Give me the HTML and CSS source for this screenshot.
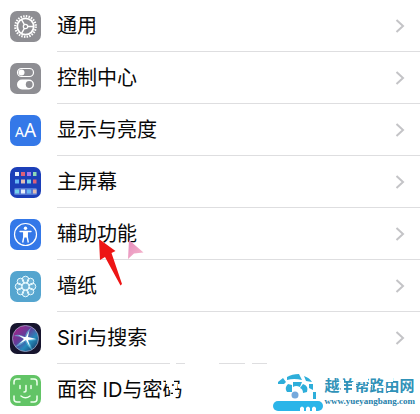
FILE: index.html
```html
<!DOCTYPE html>
<html lang="zh-CN">
<head>
<meta charset="utf-8">
<meta name="viewport" content="width=device-width, initial-scale=1">
<title>设置</title>
<link rel="stylesheet" href="styles.css">
</head>
<body>
<main class="screen">
<nav class="settings" aria-label="设置">
  <a class="row" href="#general">
    <svg class="icon" viewBox="0 0 31 31"><rect width="31" height="31" rx="7" fill="#8e8e93"/><g fill="none" stroke="#fff"><circle cx="15.5" cy="15.5" r="10.3" stroke-width="2.2" stroke-dasharray="1.5 1.197"/><circle cx="15.5" cy="15.5" r="8.2" stroke-width="1.8"/><circle cx="15.5" cy="15.5" r="2.2" stroke-width="1.2"/><path d="M17.7 15.5h6M14.4 13.6l-3-5.2M14.4 17.4l-3 5.2" stroke-width="1.4"/></g></svg>
    <span class="label">通用</span><svg class="chevron" viewBox="0 0 10 16"><path d="M1.5 2l6.5 6-6.5 6"/></svg>
  </a>
  <a class="row" href="#control">
    <svg class="icon" viewBox="0 0 31 31"><rect width="31" height="31" rx="7" fill="#8e8e93"/><rect x="7.5" y="5.5" width="16" height="8" rx="4" fill="none" stroke="#fff" stroke-width="1.2"/><circle cx="11.5" cy="9.5" r="3" fill="#fff"/><rect x="7" y="16.5" width="17" height="10" rx="5" fill="#fff"/><circle cx="19.2" cy="21.5" r="3.4" fill="#8e8e93"/></svg>
    <span class="label">控制中心</span><svg class="chevron" viewBox="0 0 10 16"><path d="M1.5 2l6.5 6-6.5 6"/></svg>
  </a>
  <a class="row" href="#display">
    <svg class="icon" viewBox="0 0 31 31"><rect width="31" height="31" rx="7" fill="#3478e8"/><g class="letters"><text x="5" y="22" font-size="14">A</text><text x="14" y="22" font-size="19">A</text></g></svg>
    <span class="label">显示与亮度</span><svg class="chevron" viewBox="0 0 10 16"><path d="M1.5 2l6.5 6-6.5 6"/></svg>
  </a>
  <a class="row" href="#home">
    <svg class="icon" viewBox="0 0 31 31"><rect width="31" height="31" rx="7" fill="#1c3fb8"/><rect x="4" y="21" width="23" height="7" rx="1.5" fill="#5578d4"/><path fill="#e9f0fa" d="M5 5h4v4H5zM11 22.500h4v4h-4z"/><path fill="#dc6078" d="M11 5h4v4h-4zM23 12.500h3.500v4H23z"/><path fill="#a477ed" d="M17 5h4v4h-4z"/><path fill="#8edab6" d="M23 5h3.500v4H23z"/><path fill="#69b9f4" d="M5 12.500h4v4H5zM17 22.500h4v4h-4z"/><path fill="#e3bdb3" d="M11 12.500h4v4h-4zM23 22.500h3.500v4H23z"/><path fill="#75d4ed" d="M17 12.500h4v4h-4zM5 22.500h4v4H5z"/></svg>
    <span class="label">主屏幕</span><svg class="chevron" viewBox="0 0 10 16"><path d="M1.5 2l6.5 6-6.5 6"/></svg>
  </a>
  <a class="row" href="#accessibility">
    <svg class="icon" viewBox="0 0 31 31"><rect width="31" height="31" rx="7" fill="#3478e8"/><circle cx="15.5" cy="15.5" r="11" fill="none" stroke="#fff" stroke-width="1.2"/><circle cx="15.5" cy="9.3" r="1.7" fill="#fff"/><path d="M10 12.500h11M13.800 13v5l-1 5M17.200 13v5l1 5" fill="none" stroke="#fff" stroke-width="1.4" stroke-linecap="round" stroke-linejoin="round"/><path d="M13.500 12.500h4v6h-4z" fill="#fff"/></svg>
    <span class="label">辅助功能<svg class="pointers" viewBox="0 0 50 50" aria-hidden="true"><defs><linearGradient id="pink" x2="1" y2="1"><stop stop-color="#e58bbc"/><stop offset="1" stop-color="#f6b9cd"/></linearGradient></defs><path d="M32 3L46.500 15.500L37 16.500L31 22z" fill="url(#pink)"/><path d="M2 2L18.500 14L14.500 16L25 47L23.500 48.500L8 20L3 23z" fill="#ed1515"/></svg></span><svg class="chevron" viewBox="0 0 10 16"><path d="M1.5 2l6.5 6-6.5 6"/></svg>
  </a>
  <a class="row" href="#wallpaper">
    <svg class="icon" viewBox="0 0 31 31"><rect width="31" height="31" rx="7" fill="#55a5cf"/><g fill="#fff" fill-opacity=".15" stroke="#e8faff" stroke-width="1"><circle cx="15.5" cy="8.5" r="3.3"/><circle cx="20.5" cy="10.5" r="3.3"/><circle cx="22.5" cy="15.5" r="3.3"/><circle cx="20.5" cy="20.5" r="3.3"/><circle cx="15.5" cy="22.5" r="3.3"/><circle cx="10.5" cy="20.5" r="3.3"/><circle cx="8.5" cy="15.5" r="3.3"/><circle cx="10.5" cy="10.5" r="3.3"/><circle cx="15.5" cy="15.5" r="3.5"/></g></svg>
    <span class="label">墙纸</span><svg class="chevron" viewBox="0 0 10 16"><path d="M1.5 2l6.5 6-6.5 6"/></svg>
  </a>
  <a class="row row-worn" href="#siri">
    <svg class="icon" viewBox="0 0 31 31"><defs><linearGradient id="siri" x2="1" y2="1"><stop stop-color="#b51d83"/><stop offset=".4" stop-color="#653b99"/><stop offset=".65" stop-color="#258abb"/><stop offset="1" stop-color="#142956"/></linearGradient></defs><rect width="31" height="31" rx="7" fill="#17152e"/><circle cx="15.5" cy="15.5" r="13" fill="url(#siri)" stroke="#a2a4c7" stroke-width=".8"/><path d="M15 14Q8 10 4 13q6 0 10 3-4 3-9 8 7-2 10-6 2 5 7 9-1-6-4-9l9-1q-5-3-9-3 1-7 4-10-6 4-7 10" fill="#66cce7" opacity=".6"/><path d="M14 14l-6-2 6 4-5 5 7-4 4 7-2-7 8-1-8-2 1-6-3 6z" fill="#fff"/></svg>
    <span class="label">Siri与搜索</span><svg class="chevron chevron-faded" viewBox="0 0 10 16"><path d="M1.5 2l6.5 6-6.5 6"/></svg>
  </a>
  <a class="row" href="#faceid">
    <svg class="icon" viewBox="0 0 31 31"><rect width="31" height="31" rx="7" fill="#62c466"/><path d="M4 9V7q0-3 3-3h3M21 4h3q3 0 3 3v3M27 21v3q0 3-3 3h-3M10 27H7q-3 0-3-3v-3M10 10.500v3M21 10.500v3M16 10.500v5q0 1.500-2 1.500M11 21q4.500 3.500 9 0" fill="none" stroke="#efffef" stroke-width="1.500" stroke-linecap="round"/></svg>
    <span class="label">面容 ID与密码<svg class="wear" viewBox="0 0 24 30" aria-hidden="true"><path d="M8 3h8v6H8zM11 11h6v4h-6zM5 22h7v5H5zM15 17h5v5h-5zM12 23h5v5h-5zM20 9h4v4h-4z" fill="#fff"/></svg></span>
  </a>
</nav>
<aside class="watermark">
  <svg class="logo" viewBox="0 0 50 40" aria-hidden="true"><path d="M14 5q5-3 12-3l3 6q-8-2-15 0zM5 10l5-4 3 4-2 2H5zM31 4q6 2 8 6l-6-1zM14 20q-3-4 1-8l4 1v7zM20 10h9l-2 5q-4-2-7 0zM30 12q6 2 4 8l-4 1q0-4-3-5zM36 12h4v6l-4-2zM40 20h3v7h-3z" fill="#2eaeda"/><circle cx="22" cy="23" r="3.5" fill="#76a9dc"/><rect y="29" width="50" height="10" rx="5" fill="#2bb5e9"/><path d="M27 39v-3q2-3 4 0v3zM33 39v-3q2-3 4 0v3zM39 39v-3q2-3 4 0v3z" fill="#fff"/></svg>
  <div class="brand"><strong>越羊帮路由网</strong><span>www.yueyangbang.com</span>
    <svg class="brand-wear" viewBox="0 0 90 18" aria-hidden="true"><path d="M17 3h3v13h-3zM28 5h4v10h-4zM31 0h13v5H31zM44 7h3v3h-3zM51 9h9v2h-9zM60 1h9v4h-9zM63 11h3v3h-3z" fill="#fff"/></svg>
  </div>
</aside>
</main>
</body>
</html>
```
FILE: styles.css
```css
* { box-sizing: border-box; }
html, body { height: 100%; }
body { margin: 0; overflow: hidden; background: #fff; color: #080808; font-family: Inter, "Noto Sans CJK SC", sans-serif; }
.screen { position: relative; height: 100%; overflow: hidden; }
.row { display: grid; grid-template-columns: 31px 1fr 10px; align-items: center; column-gap: 16px; height: 52px; padding: 0 15px 0 10px; color: inherit; text-decoration: none; background: linear-gradient(#dedee0, #dedee0) 57px 100% / 100% 1px no-repeat; }
.row-worn { background-image: linear-gradient(90deg, #dedee0 113px, #fff 113px 119px, #dedee0 119px 128px, #fff 128px 162px, #dedee0 162px 188px, #fff 188px 195px, #dedee0 195px 210px, #fff 210px); }
.icon { width: 31px; height: 31px; }
.letters { fill: #fff; font-family: "Noto Sans", sans-serif; }
.label { position: relative; justify-self: start; font-size: 20px; line-height: 30px; white-space: nowrap; }
.chevron { width: 10px; height: 16px; fill: none; stroke: #c4c4c7; stroke-width: 2; }
.pointers { position: absolute; left: 40px; top: 18px; width: 50px; height: 50px; z-index: 1; }
.wear { position: absolute; right: 0; top: 0; width: 24px; height: 30px; }
.watermark { position: absolute; right: 5px; bottom: 2px; display: flex; align-items: center; gap: 1px; }
.logo { width: 50px; height: 40px; }
.brand { position: relative; display: flex; flex-direction: column; color: #2680aa; font-family: "Liberation Serif", "Noto Sans CJK SC", serif; }
.brand strong { color: #3092b8; font-size: 15px; line-height: 18px; }
.brand span { font-size: 9px; font-weight: 700; line-height: 12px; }
.brand-wear { position: absolute; left: 0; top: 0; width: 90px; height: 18px; }
```
